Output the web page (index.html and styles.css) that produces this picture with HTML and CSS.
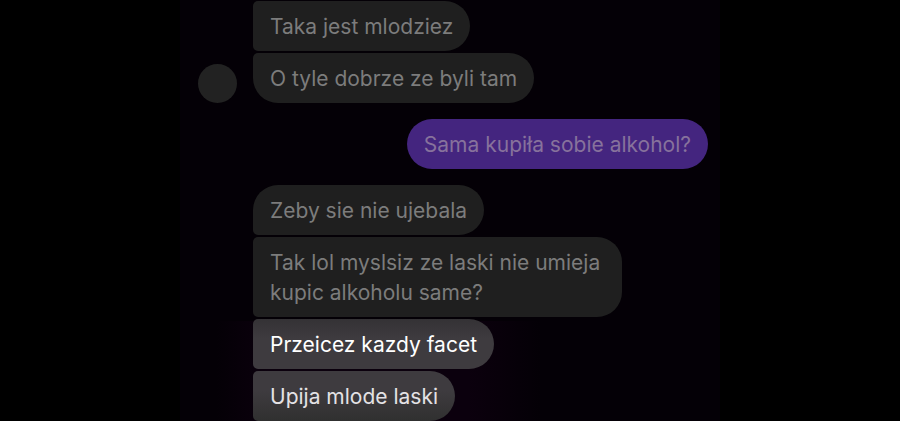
FILE: index.html
```html
<!DOCTYPE html>
<html lang="pl">

<head>
    <meta charset="utf-8">
    <title>Chat</title>
    <link rel="stylesheet" href="styles.css">
</head>

<body>
    <main class="chat">
        <div class="group received">
            <div class="avatar"></div>
            <div class="messages">
                <p class="bubble">Taka jest mlodziez</p>
                <p class="bubble last">O tyle dobrze ze byli tam</p>
            </div>
        </div>
        <div class="group sent">
            <p class="bubble">Sama kupiła sobie alkohol?</p>
        </div>
        <div class="group received">
            <div class="messages">
                <p class="bubble first">Zeby sie nie ujebala</p>
                <p class="bubble">Tak lol myslsiz ze laski nie umieja kupic alkoholu same?</p>
                <p class="bubble bright">Przeicez kazdy facet</p>
                <p class="bubble bright fade">Upija mlode laski</p>
            </div>
        </div>
    </main>
</body>

</html>
```

FILE: styles.css
```css
* {
    box-sizing: border-box;
}

body {
    margin: 0;
    background-color: #000;
    font-family: Inter, "Liberation Sans", sans-serif;
    font-size: 21px;
    line-height: 30px;
}

.chat {
    display: flex;
    flex-direction: column;
    gap: 16px;
    max-width: 540px;
    margin: 0 auto;
    padding: 1px 12px 0 18px;
    background-color: #040006;
    background-image: linear-gradient(90deg, transparent 10%, #0b000d 25%, #0b000d 80%, transparent);
    background-size: 360px 100px;
    background-position: left bottom;
    background-repeat: no-repeat;
}

.group {
    display: grid;
    grid-template-columns: 39px 1fr;
    column-gap: 16px;
}

.avatar {
    width: 39px;
    height: 39px;
    align-self: end;
    border-radius: 50%;
    background-color: #222;
}

.messages {
    grid-column: 2;
    display: flex;
    flex-direction: column;
    align-items: flex-start;
    gap: 2px;
}

.bubble {
    margin: 0;
    padding: 11px 17px 9px;
    max-width: 81%;
    border-radius: 5px 25px 25px 5px;
    background-color: #1f1f1f;
    color: #7c7c7c;
}

.first {
    border-top-left-radius: 25px;
}

.last {
    border-bottom-left-radius: 25px;
}

.sent .bubble {
    grid-column: 2;
    justify-self: end;
    border-radius: 25px;
    background-color: #44257f;
    color: #87729c;
}

.bright {
    background-color: #3e3b3f;
    background-image: linear-gradient(#343235, #3e3b3f 40%);
    color: #fff;
}

.fade {
    background-image: linear-gradient(#3e3b3f 40%, #303030);
    color: #e4e2e5;
}
```
